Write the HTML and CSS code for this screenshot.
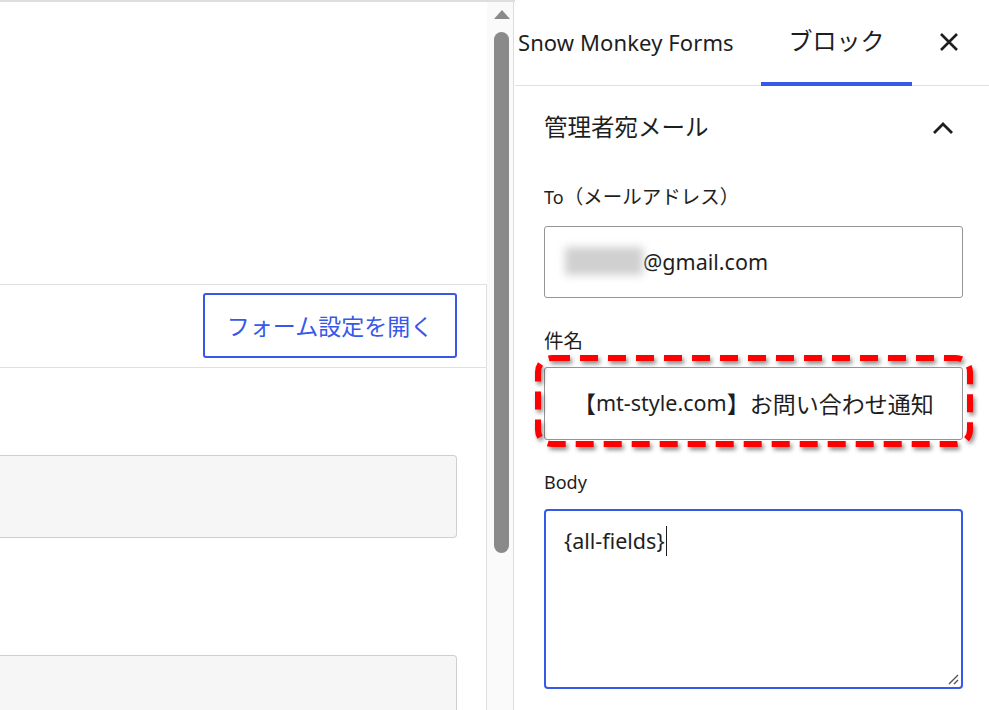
FILE: index.html
```html
<!DOCTYPE html>
<html lang="ja">
<head>
<meta charset="utf-8">
<title>Snow Monkey Forms</title>
<link rel="stylesheet" href="styles.css">
</head>
<body>
<div class="app">
  <main class="editor">
    <div class="canvas">
      <div class="form-block">
        <div class="form-head">
          <button class="open-settings" type="button">フォーム設定を開く</button>
        </div>
        <div class="form-body">
          <div class="field-box"></div>
          <div class="field-box"></div>
        </div>
      </div>
    </div>
    <div class="scrollbar">
      <div class="scroll-up"></div>
      <div class="scroll-thumb"></div>
    </div>
  </main>

  <aside class="sidebar">
    <div class="tabs">
      <div class="tab tab-plugin">Snow Monkey Forms</div>
      <div class="tab tab-block is-active">ブロック</div>
      <button class="close" type="button" aria-label="閉じる">
        <svg width="20" height="20" viewBox="0 0 20 20"><path d="M2 2 L18 18 M18 2 L2 18" stroke="#1e1e1e" stroke-width="2.6" fill="none"/></svg>
      </button>
    </div>

    <section class="panel">
      <div class="panel-title">
        <span>管理者宛メール</span>
        <svg class="chevron" width="22" height="14" viewBox="0 0 22 14"><path d="M2 12 L11 3 L20 12" stroke="#1e1e1e" stroke-width="2.8" fill="none"/></svg>
      </div>

      <div class="field">
        <div class="label">To<span class="ja">（メールアドレス）</span></div>
        <div class="input"><span class="redacted"></span>@gmail.com</div>
      </div>

      <div class="field">
        <div class="label"><span class="ja">件名</span></div>
        <div class="subject-wrap">
          <div class="input input-subject"><span class="ja">【</span>mt-style.com<span class="ja">】お問い合わせ通知</span></div>
          <svg class="highlight" width="442" height="96" viewBox="0 0 442 96">
            <rect x="4" y="4" width="432" height="86" rx="14" ry="14" fill="none" stroke="#ff0000" stroke-width="6" stroke-dasharray="18 10"/>
          </svg>
        </div>
      </div>

      <div class="field">
        <div class="label">Body</div>
        <div class="textarea"><span>{all-fields}</span><span class="caret"></span>
          <svg class="grip" width="12" height="12" viewBox="0 0 12 12"><path d="M2 11 L11 2 M7 11 L11 7" stroke="#555" stroke-width="1.4"/></svg>
        </div>
      </div>
    </section>
  </aside>
</div>
</body>
</html>
```

FILE: styles.css
```css
* {
  box-sizing: border-box;
}

html, body {
  margin: 0;
  padding: 0;
}

body {
  width: 989px;
  height: 710px;
  overflow: hidden;
  background: #fff;
  color: #1e1e1e;
  font-family: "Noto Sans", "Noto Sans CJK JP", sans-serif;
}

.app {
  display: flex;
  height: 710px;
}

/* ---------- editor canvas ---------- */
.editor {
  display: flex;
  width: 515px;
  flex: none;
  border-top: 2px solid #dedede;
}

.canvas {
  width: 487px;
  flex: none;
  padding-top: 282px;
}

.form-block {
  border-top: 1px solid #e0e0e0;
  border-right: 1px solid #e0e0e0;
  height: 100%;
}

.form-head {
  display: flex;
  justify-content: flex-end;
  align-items: flex-start;
  height: 83px;
  padding: 8px 29px 0 0;
  border-bottom: 1px solid #e0e0e0;
}

.open-settings {
  width: 254px;
  height: 65px;
  background: #fff;
  border: 2px solid #3858e9;
  border-radius: 3px;
  color: #3858e9;
  font-family: "Noto Sans CJK JP", sans-serif;
  font-size: 23px;
  padding: 0;
  padding-bottom: 2px;
}

.form-body {
  padding: 87px 29px 0 0;
  display: flex;
  flex-direction: column;
  gap: 117px;
}

.field-box {
  height: 83px;
  background: #f6f6f6;
  border: 1px solid #cfcfcf;
  border-left: none;
  border-radius: 0 4px 4px 0;
}

.scrollbar {
  width: 27px;
  flex: none;
  background: #fafafa;
  border-right: 1px solid #dcdcdc;
  padding-top: 8px;
}

.scroll-up {
  width: 0;
  height: 0;
  margin-left: 7px;
  border-left: 8px solid transparent;
  border-right: 8px solid transparent;
  border-bottom: 9px solid #8a8a8a;
}

.scroll-thumb {
  margin: 13px 0 0 7px;
  width: 15px;
  height: 521px;
  border-radius: 8px;
  background: #8a8a8a;
}

/* ---------- settings sidebar ---------- */
.sidebar {
  flex: 1;
  min-width: 0;
}

.tabs {
  display: flex;
  align-items: stretch;
  height: 86px;
  border-bottom: 1px solid #e0e0e0;
}

.tab {
  display: flex;
  align-items: center;
  color: #1e1e1e;
  padding-bottom: 2px;
}

.tab-plugin {
  width: 246px;
  padding-left: 3px;
  font-size: 22px;
  letter-spacing: 0.1px;
}

.tab-block {
  width: 151px;
  justify-content: center;
  font-family: "Noto Sans CJK JP", sans-serif;
  font-size: 24px;
  border-bottom: 4px solid #3858e9;
  margin-bottom: -1px;
  padding-bottom: 3px;
}

.close {
  flex: 1;
  border: none;
  background: transparent;
  display: flex;
  align-items: center;
  justify-content: center;
  padding: 0 4px 2px 0;
}

.panel {
  padding: 0 26px 0 29px;
}

.panel-title {
  display: flex;
  align-items: center;
  justify-content: space-between;
  height: 80px;
  font-family: "Noto Sans CJK JP", sans-serif;
  font-size: 23.5px;
  padding-right: 9px;
}

.chevron {
  margin-top: 4px;
}

.field {
  margin-top: 18px;
}

.field + .field {
  margin-top: 30px;
}

.label {
  font-size: 18px;
  line-height: 24px;
}

.ja {
  font-family: "Noto Sans CJK JP", sans-serif;
}

.label .ja {
  font-size: 19.5px;
}

.input {
  margin-top: 17px;
  height: 72px;
  border: 1px solid #949494;
  border-radius: 3px;
  display: flex;
  align-items: center;
  padding: 0 0 2px 18px;
  font-size: 21.5px;
  white-space: nowrap;
  overflow: hidden;
}

.redacted {
  display: inline-block;
  width: 78px;
  height: 28px;
  margin-left: 2px;
  background: #d0d0d0;
  filter: blur(4px);
}

.subject-wrap {
  position: relative;
  margin-top: 14px;
}

.input-subject {
  margin-top: 0;
  height: 73px;
  padding-left: 28px;
}

.input-subject .ja {
  font-size: 23px;
}

.highlight {
  position: absolute;
  left: -10px;
  top: -13px;
  filter: drop-shadow(2px 3px 2px rgba(0, 0, 0, 0.45));
  pointer-events: none;
}

.textarea {
  position: relative;
  margin-top: 15px;
  height: 180px;
  border: 2px solid #3858e9;
  border-radius: 4px;
  padding: 15px 18px;
  font-size: 21.5px;
  line-height: 30px;
}

.caret {
  display: inline-block;
  width: 1px;
  height: 30px;
  background: #1e1e1e;
  vertical-align: top;
  margin-left: 1px;
}

.grip {
  position: absolute;
  right: 2px;
  bottom: 2px;
}
```
